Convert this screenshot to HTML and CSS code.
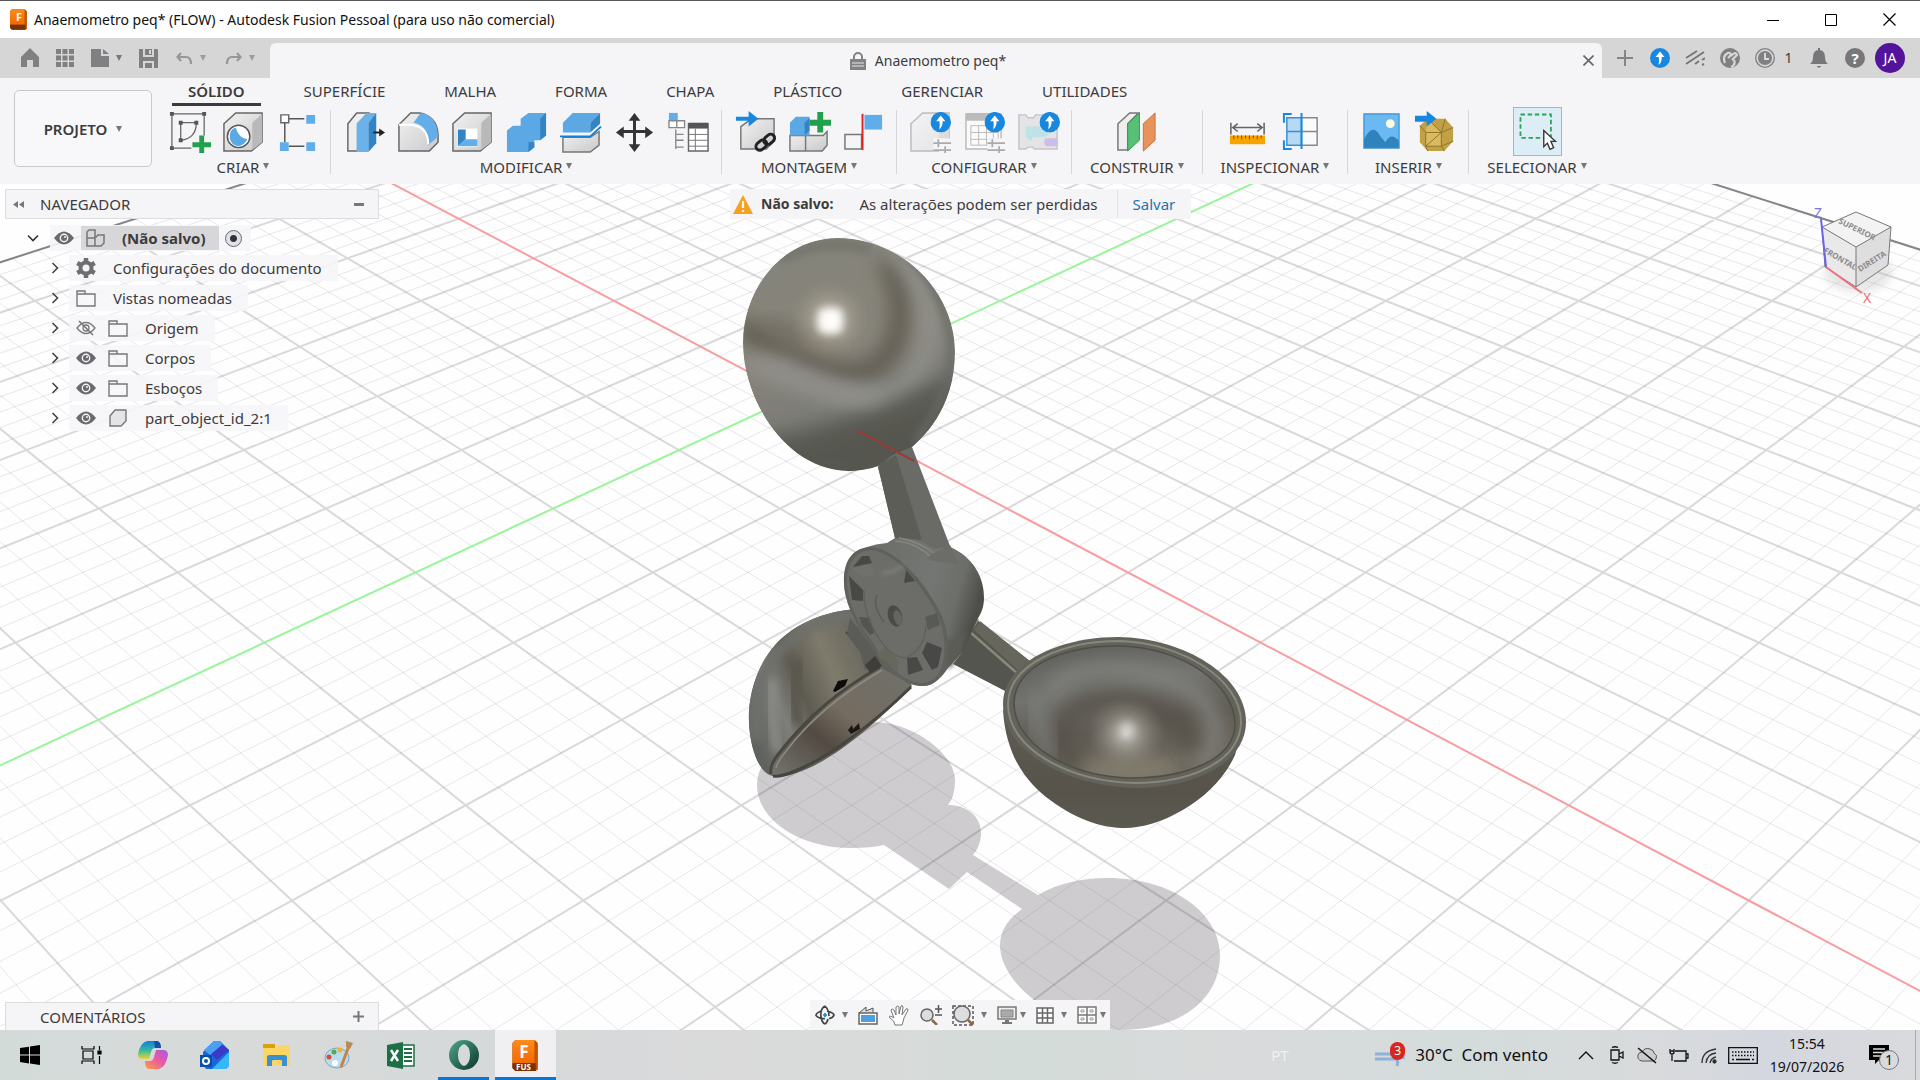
FILE: index.html
```html
<!DOCTYPE html>
<html lang="pt-BR">
<head>
<meta charset="utf-8">
<title>Anaemometro peq* (FLOW) - Autodesk Fusion Pessoal</title>
<meta name="viewport" content="width=device-width, initial-scale=1">
<link rel="stylesheet" href="styles.css">
</head>
<body>
<svg class="defs" width="0" height="0" aria-hidden="true">
  <defs>
    <linearGradient id="orange" x1="0" y1="0" x2="0" y2="1"><stop offset="0" stop-color="#ff8a1c"/><stop offset="1" stop-color="#f26a00"/></linearGradient>
    <linearGradient id="steel" x1="0" y1="0" x2="1" y2="1"><stop offset="0" stop-color="#f2f2f2"/><stop offset="1" stop-color="#c9c9c9"/></linearGradient>
    <symbol id="fusion" viewBox="0 0 28 32"><path d="M3 0h20l3 3v27l-2 2H3L0 29V3z" fill="#a33f00"/><path d="M3 0h20v24H0V3z" fill="url(#orange)"/><path d="M23 1l3 3v27l-3-1z" fill="#c65300"/><path d="M0 24h24v8H3L0 29z" fill="#7c2f00"/></symbol>
    <symbol id="eye" viewBox="0 0 20 14"><path d="M0 7Q10-6 20 7Q10 20 0 7z" fill="#6a6a6e"/><circle cx="10" cy="7" r="4.4" fill="#f5f4f7"/><circle cx="10" cy="7" r="3" fill="#6a6a6e"/><circle cx="11" cy="6" r="1" fill="#f5f4f7"/></symbol>
    <symbol id="folder" viewBox="0 0 20 17"><path d="M1 4V1h8v3M1 4h18v12H1z" fill="none" stroke="#77777b" stroke-width="1.4"/></symbol>
    <symbol id="chev" viewBox="0 0 8 12"><path d="M1.5 1l5 5-5 5" fill="none" stroke="#444" stroke-width="1.6"/></symbol>
    <symbol id="up" viewBox="0 0 20 20"><circle cx="10" cy="10" r="10" fill="#1787e0"/><path d="M10 3.5L14.500 9H11.800Q12 14 8.500 17Q9.500 13 8.700 9H5.500z" fill="#fff"/></symbol>
    <symbol id="box" viewBox="0 0 44 44"><path d="M2 14L14 3H41V33L30 42H2z" fill="url(#steel)" stroke="#666" stroke-width="1.500"/><path d="M31 13L41 4V33L31 41z" fill="#b9b9b9"/></symbol>
  </defs>
</svg>

<div class="app">
  <header class="titlebar">
    <span class="applogo"><svg width="18" height="21"><use href="#fusion"/></svg><b>F</b></span>
    <h1>Anaemometro peq* (FLOW) - Autodesk Fusion Pessoal (para uso não comercial)</h1>
    <div class="wincontrols">
      <button aria-label="Minimizar"><svg width="12" height="12"><path d="M0 6.500h12" stroke="#000"/></svg></button>
      <button aria-label="Maximizar"><svg width="12" height="12"><path d="M.5.5h11v11H.5z" fill="none" stroke="#000"/></svg></button>
      <button aria-label="Fechar"><svg width="13" height="13"><path d="M.5.5l12 12M12.500.5l-12 12" stroke="#000" stroke-width="1.200"/></svg></button>
    </div>
  </header>

  <div class="tabbar">
    <div class="quick">
      <button aria-label="Início"><svg width="20" height="20"><path d="M10 0L19 9V19H13V12H7V19H1V9z" fill="#808083"/></svg></button>
      <button aria-label="Painel de dados"><svg width="18" height="18" fill="#808083"><path d="M0 0h5v5H0zM6.500 0h5v5h-5zM13 0h5v5h-5zM0 6.500h5v5H0zM6.500 6.500h5v5h-5zM13 6.500h5v5h-5zM0 13h5v5H0zM6.500 13h5v5h-5zM13 13h5v5h-5z"/></svg></button>
      <button class="wide" aria-label="Arquivo"><svg width="18" height="18" fill="#808083"><path d="M0 0h10v7h8v11H0zM12 0l6 5h-6z"/></svg><i class="caret"></i></button>
      <button aria-label="Salvar"><svg width="19" height="19" fill="#808083"><path d="M0 0h4v8h11V0h3l1 1v18h-4v-7H4v7H0zM6 0h7v6H6zM6 14h7v5H6z"/><path d="M10 1h2v4h-2z" fill="#d6d6d6"/></svg></button>
      <button class="wide dim" aria-label="Desfazer"><svg width="17" height="13"><path d="M5 1L1.500 5L5 9M2 5h8q5 0 5 7" fill="none" stroke="#97979a" stroke-width="2.200"/></svg><i class="caret"></i></button>
      <button class="wide dim" aria-label="Refazer"><svg width="17" height="13"><path d="M12 1l3.500 4L12 9M15 5H7Q2 5 2 12" fill="none" stroke="#97979a" stroke-width="2.200"/></svg><i class="caret"></i></button>
    </div>
    <div class="doctab">
      <div class="docname"><svg width="16" height="18"><path d="M4 8V5a4 4 0 018 0v3" fill="none" stroke="#828285" stroke-width="2"/><path d="M0 7h16v11H0z" fill="#828285"/><path d="M2 11h12M2 14h12" stroke="#e6e6e8"/></svg><span>Anaemometro peq*</span></div>
      <button class="closetab" aria-label="Fechar guia"><svg width="11" height="11"><path d="M.5.5l10 10M10.500.5l-10 10" stroke="#666" stroke-width="1.600"/></svg></button>
    </div>
    <div class="status">
      <button aria-label="Nova guia"><svg width="16" height="16"><path d="M8 0v16M0 8h16" stroke="#858588" stroke-width="2"/></svg></button>
      <button aria-label="Atualização"><svg width="20" height="20"><use href="#up"/></svg></button>
      <button aria-label="Extensões"><svg width="20" height="16" stroke="#77777a" stroke-width="2" fill="none"><path d="M1 8L12 1M1 14L19 2M10 14l4-3M17 10l3-2M17 15l2-1"/></svg></button>
      <button aria-label="Estado"><svg width="20" height="20"><circle cx="10" cy="10" r="10" fill="#808083"/><path d="M5 15Q2 8 8 5Q10 4 11 7L8 10M11 8Q15 3 17 7L12 12M11 19Q16 17 14 12" stroke="#d6d6d6" stroke-width="2.200" fill="none"/></svg></button>
      <button class="jobs" aria-label="Tarefas"><svg width="20" height="20"><circle cx="10" cy="10" r="9.300" fill="none" stroke="#808083" stroke-width="1.300"/><circle cx="10" cy="10" r="7" fill="#808083"/><path d="M10 5v6h4" stroke="#ddd" stroke-width="1.800" fill="none"/></svg><span>1</span></button>
      <button aria-label="Notificações"><svg width="18" height="20" fill="#77777a"><path d="M8 0h2v2q5 1 5 7q0 5 3 7H0q3-2 3-7q0-6 5-7zM6.500 18h5l-2.500 2z"/></svg></button>
      <button class="help" aria-label="Ajuda">?</button>
      <button class="avatar" aria-label="Conta">JA</button>
    </div>
  </div>

  <div class="ribbon">
    <button class="workspace">PROJETO<i class="caret"></i></button>
    <div class="tools">
      <nav class="rtabs">
        <a href="#" class="on">SÓLIDO</a><a href="#">SUPERFÍCIE</a><a href="#">MALHA</a><a href="#">FORMA</a><a href="#">CHAPA</a><a href="#">PLÁSTICO</a><a href="#">GERENCIAR</a><a href="#">UTILIDADES</a>
      </nav>
      <div class="groups">
        <section class="group">
          <div class="icons">
            <button aria-label="Criar esboço"><svg viewBox="0 0 44 44"><path d="M4 4h33v22M4 4v35h20M13 13h16M13 13v18q16-2 16-18" fill="none" stroke="#666" stroke-width="1.300"/><g fill="#555"><path d="M2 2h4v4H2zM35 2h4v4h-4zM2 37h4v4H2zM11 11h4v4h-4zM27 11h4v4h-4zM11 29h4v4h-4z"/></g><path d="M32 26h5v7h7v5h-7v7h-5v-7h-7v-5h7z" fill="#22a04b"/></svg></button>
            <button aria-label="Furo"><svg viewBox="0 0 44 44"><use href="#box"/><circle cx="17" cy="27" r="11.500" fill="#fff" stroke="#555" stroke-width="1.500"/><path d="M8 29Q7 20 14 18Q17 29 26 30Q23 36 17 37Q9 36 8 29z" fill="#5aa9e6"/></svg></button>
            <button aria-label="Padrão"><svg viewBox="0 0 44 44"><path d="M13 9h16M13 37h16M9 13v20" stroke="#555" stroke-width="1.500"/><path d="M5 5h8v8H5z" fill="#fff" stroke="#666" stroke-width="1.500"/><path d="M31 5h9v9h-9zM4 33h9v9H4zM31 33h9v9h-9z" fill="#5fadea"/></svg></button>
          </div>
          <button class="glabel">CRIAR<i class="caret"></i></button>
        </section>
        <section class="group">
          <div class="icons">
            <button aria-label="Pressionar/puxar"><svg viewBox="0 0 44 44"><path d="M5 14L14 3h12L15 14v28H5z" fill="#eee" stroke="#666" stroke-width="1.500"/><path d="M14 14L24 3h10L26 13v30H14z" fill="#6bb2ea"/><path d="M26 13L34 3v31l-8 9z" fill="#3384c4"/><path d="M31 23h8" stroke="#222" stroke-width="2"/><path d="M37 19l6 4-6 4z" fill="#222"/></svg></button>
            <button aria-label="Arredondar"><svg viewBox="0 0 44 44"><path d="M2 15L14 3h10q17 4 18 22v8l-9 9H2z" fill="url(#steel)" stroke="#666" stroke-width="1.500"/><path d="M24 3q17 2 18 24l-10 9Q33 16 17 13z" fill="#63aee8"/><path d="M2 15h12q18 2 18 20" fill="none" stroke="#fff" stroke-width="2"/></svg></button>
            <button aria-label="Casca"><svg viewBox="0 0 44 44"><use href="#box"/><path d="M6 19h21v19H6z" fill="#fff"/><path d="M7 20h8v10l-8 7z" fill="#3384c4"/><path d="M15 30h12v7H7z" fill="#63aee8"/></svg></button>
            <button aria-label="Combinar"><svg viewBox="0 0 44 44"><path d="M2 21l6-5h8V9l8-6h18v23l-6 5h-6v7l-6 5H2z" fill="#5ba8e4"/><path d="M36 9l6-6v23l-6 5zM24 33h6v5l-6 5z" fill="#3384c4"/></svg></button>
            <button aria-label="Dividir corpo"><svg viewBox="0 0 44 44"><path d="M4 28h28l9-6v14l-9 7H4z" fill="url(#steel)" stroke="#777" stroke-width="1.500"/><path d="M4 13L14 3h28L32 13v10H4z" fill="#5ba8e4"/><path d="M32 13L42 3v11l-10 9z" fill="#3384c4"/><path d="M1 27h31l11-10" fill="none" stroke="#1680d0" stroke-width="2"/></svg></button>
            <button aria-label="Mover/copiar"><svg viewBox="0 0 44 44"><path d="M22 8v28M8 22h28" stroke="#333" stroke-width="3"/><path d="M22 3l6 8H16zM22 43l6-8H16zM3 23l8-6v12zM41 23l-8-6v12z" fill="#333"/></svg></button>
            <button aria-label="Parâmetros"><svg viewBox="0 0 44 44"><path d="M2 3h9v9H2z" fill="#5fadea"/><path d="M2 11h8v7H2zM10 11h8v7h-8zM9 20v20M9 25h8M9 31h8M9 38h8" fill="#fff" stroke="#888" stroke-width="1.400"/><path d="M22 14h20v28H22z" fill="#fff" stroke="#666" stroke-width="1.500"/><path d="M22 13h20v6H22z" fill="#555"/><path d="M22 25h20M22 31h20M22 37h20M29 19v23" stroke="#777"/></svg></button>
          </div>
          <button class="glabel">MODIFICAR<i class="caret"></i></button>
        </section>
        <section class="group">
          <div class="icons">
            <button aria-label="Inserir componente"><svg viewBox="0 0 44 44"><path d="M7 17L18 9h23v23l-8 8H7z" fill="url(#steel)" stroke="#777" stroke-width="1.500"/><path d="M2 7h13V1l10 8-10 8v-6H2z" fill="#1787e0"/><g fill="none" stroke="#222" stroke-width="3"><rect x="22" y="32" width="12" height="8" rx="4" transform="rotate(-40 28 36)"/><rect x="30" y="26" width="12" height="8" rx="4" transform="rotate(-40 36 30)"/></g></svg></button>
            <button aria-label="Novo componente"><svg viewBox="0 0 44 44"><path d="M2 26h34l4-4v14l-5 6H2zM18 26v16" fill="url(#steel)" stroke="#777" stroke-width="1.500"/><path d="M2 13l6-6h14v19H2z" fill="#5ba8e4"/><path d="M17 13l5-5v13l-5 5z" fill="#3384c4"/><path d="M30 2h6v8h8v6h-8v7h-6v-7h-8v-6h8z" fill="#22a04b"/></svg></button>
            <button aria-label="Junta"><svg viewBox="0 0 44 44"><path d="M3 25h17v15H3z" fill="none" stroke="#777" stroke-width="1.500"/><path d="M23 5h18v15H23z" fill="#5fadea"/><path d="M21 4v37" stroke="#d22" stroke-width="2"/></svg></button>
          </div>
          <button class="glabel">MONTAGEM<i class="caret"></i></button>
        </section>
        <section class="group">
          <div class="icons">
            <button aria-label="Configurar"><svg viewBox="0 0 44 44"><g opacity=".4"><use href="#box"/></g><path d="M25 29h19v13H25z" fill="#f5f4f7"/><path d="M25 34h18M25 41h18M30 30v8M37 37v7" stroke="#aaa" stroke-width="1.800"/><use href="#up" x="22" y="2" width="21" height="21"/></svg></button>
            <button aria-label="Tabela de configurações"><svg viewBox="0 0 44 44"><path d="M3 4h36v36H3z" fill="#fafafa" stroke="#bbb" stroke-width="1.500"/><path d="M3 3h36v8H3z" fill="#bbb"/><path d="M8 16h28v20H8zM8 23h28M8 30h28M16 16v20M24 16v20M31 16v20" fill="none" stroke="#bbb"/><path d="M25 29h19v13H25z" fill="#f5f4f7"/><path d="M25 34h18M25 41h18M30 30v8M37 37v7" stroke="#aaa" stroke-width="1.800"/><use href="#up" x="22" y="2" width="21" height="21"/></svg></button>
            <button aria-label="Regras"><svg viewBox="0 0 44 44"><path d="M2 5h7l2 3h6l2-3h22v35H18l-2-2h-5l-2 2H2z" fill="#e4e4e6" stroke="#c5c5c7" stroke-width="1.500"/><path d="M9 17h18q6 1 9 6l-8 5H16l-2 4-5-5z" fill="#bfe2e6"/><rect x="28" y="29" width="14" height="8" rx="3" fill="#cdbde8"/><use href="#up" x="23" y="2" width="21" height="21"/></svg></button>
          </div>
          <button class="glabel">CONFIGURAR<i class="caret"></i></button>
        </section>
        <section class="group">
          <div class="icons">
            <button aria-label="Plano de deslocamento"><svg viewBox="0 0 44 44"><path d="M3 14L15 3h9L13 14v27H3z" fill="#eee" stroke="#777" stroke-width="1.500"/><path d="M13 14L25 3v28L13 42z" fill="#57c074" stroke="#3b9655"/><path d="M29 14L41 3v28L29 42z" fill="#e8935c" stroke="#c27441"/></svg></button>
          </div>
          <button class="glabel">CONSTRUIR<i class="caret"></i></button>
        </section>
        <section class="group">
          <div class="icons">
            <button aria-label="Medir"><svg viewBox="0 0 44 44"><path d="M5 13v12M39 13v12M8 18h28M12 14l-5 4 5 4M32 14l5 4-5 4" fill="none" stroke="#666" stroke-width="1.600"/><path d="M4 26h36v9H4z" fill="#f6a400"/><path d="M8 26v4M12 26v3M16 26v4M20 26v3M24 26v4M28 26v3M32 26v4M36 26v3" stroke="#7a5200"/></svg></button>
            <button aria-label="Análise de seção"><svg viewBox="0 0 44 44"><path d="M22 8h16v28H22M22 22h16" fill="#fafafa" stroke="#888" stroke-width="1.500"/><path d="M7 8h15v28H7zM7 22h15" fill="#b6daf4" stroke="#3b8fd0" stroke-width="1.500"/><path d="M22 3v37M12 4H4v9M12 40H4v-9" fill="none" stroke="#1787e0" stroke-width="2"/></svg></button>
          </div>
          <button class="glabel">INSPECIONAR<i class="caret"></i></button>
        </section>
        <section class="group">
          <div class="icons">
            <button aria-label="Inserir imagem"><svg viewBox="0 0 44 44"><path d="M4 4h36v35H4z" fill="#6ab9f2"/><circle cx="31" cy="14" r="4.500" fill="#fdfbe0"/><path d="M4 30q9-18 17-3l5 6q6-11 14-1v7H4z" fill="#2f83bd"/><path d="M4 4h36v35H4z" fill="none" stroke="#3b8fd0" stroke-width="1.200"/></svg></button>
            <button aria-label="Inserir malha"><svg viewBox="0 0 44 44"><path d="M14 9h18l8 9v14l-9 10H14L6 33V16z" fill="#c2a045"/><path d="M12 23h16v14H12zM14 9l14 14H12z" fill="#d9bb60"/><path d="M14 9l14 14M32 9l-4 14H12L6 16M28 23l12-5M28 23v14l12-5M12 23v14h16l3 5M12 37L28 23M12 37l2 5" fill="none" stroke="#8f742b"/><path d="M1 6h12V1l10 8-10 8v-5H1z" fill="#1787e0"/></svg></button>
          </div>
          <button class="glabel">INSERIR<i class="caret"></i></button>
        </section>
        <section class="group last">
          <div class="icons">
            <button class="picked" aria-label="Selecionar"><svg viewBox="0 0 48 48"><path d="M5 5h34v26H5z" fill="none" stroke="#2ca35a" stroke-width="2" stroke-dasharray="5 3"/><path d="M31 23v18l4-4 3 7 4-2-3-7h5z" fill="#fff" stroke="#333" stroke-width="1.500"/></svg></button>
          </div>
          <button class="glabel">SELECIONAR<i class="caret"></i></button>
        </section>
      </div>
    </div>
  </div>

  <main class="stage">
    <svg class="scene" viewBox="0 184 1920 846" preserveAspectRatio="xMidYMid slice" role="img" aria-label="Modelo do anemômetro">
      <defs>
        <linearGradient id="ball" x1=".35" y1="0" x2=".6" y2="1"><stop offset="0" stop-color="#85847a"/><stop offset=".45" stop-color="#88847a"/><stop offset=".7" stop-color="#7c7c77"/><stop offset=".85" stop-color="#5c5c57"/><stop offset="1" stop-color="#55554f"/></linearGradient>
        <radialGradient id="glow"><stop offset="0" stop-color="#fff"/><stop offset=".2" stop-color="#e8e5df"/><stop offset=".5" stop-color="#b0a99b" stop-opacity=".7"/><stop offset="1" stop-color="#968e80" stop-opacity="0"/></radialGradient>
        <radialGradient id="soft"><stop offset="0" stop-color="#c8c6c1"/><stop offset=".3" stop-color="#a3a098" stop-opacity=".9"/><stop offset="1" stop-color="#7c766b" stop-opacity="0"/></radialGradient>
        <linearGradient id="cupout" x1="0" y1="0" x2="0" y2="1"><stop offset="0" stop-color="#5d5c54"/><stop offset=".7" stop-color="#57534b"/><stop offset="1" stop-color="#5a5a50"/></linearGradient>
        <linearGradient id="cupin" x1="0" y1="0" x2=".3" y2="1"><stop offset="0" stop-color="#5b5c57"/><stop offset=".4" stop-color="#72726e"/><stop offset=".7" stop-color="#5f5a54"/><stop offset="1" stop-color="#6c675c"/></linearGradient>
        <linearGradient id="lcup" x1="0" y1=".7" x2="1" y2=".2"><stop offset="0" stop-color="#60625d"/><stop offset=".22" stop-color="#7e7f7b"/><stop offset=".38" stop-color="#5e5b52"/><stop offset=".6" stop-color="#7f7b6c"/><stop offset="1" stop-color="#5b5a53"/></linearGradient>
        <linearGradient id="lin" x1="0" y1="1" x2="1" y2="0"><stop offset="0" stop-color="#74766f"/><stop offset=".35" stop-color="#524a43"/><stop offset=".55" stop-color="#756c60"/><stop offset="1" stop-color="#6f706b"/></linearGradient>
        <linearGradient id="hub" x1="0" y1="0" x2="1" y2=".3"><stop offset="0" stop-color="#696a66"/><stop offset=".65" stop-color="#737672"/><stop offset=".85" stop-color="#6c6e6a"/><stop offset="1" stop-color="#4d4d49"/></linearGradient>
        <filter id="b2" x="-50%" y="-50%" width="200%" height="200%"><feGaussianBlur stdDeviation="2"/></filter>
        <filter id="b4" x="-50%" y="-50%" width="200%" height="200%"><feGaussianBlur stdDeviation="4"/></filter>
        <filter id="b9" x="-50%" y="-50%" width="200%" height="200%"><feGaussianBlur stdDeviation="9"/></filter>
        <path id="ballshape" d="M743 343C743 285 785 238 838 238C900 238 955 290 955 352C955 410 920 440 912 447C890 465 868 471 848 471C785 469 743 400 743 343z"/>
        <clipPath id="ballclip"><use href="#ballshape"/></clipPath>
        <path id="inner" d="M1014 703C1015 665 1065 645 1122 646C1182 648 1235 684 1235 724C1235 760 1185 778 1130 778C1066 776 1014 743 1014 703z"/>
        <clipPath id="innerclip"><use href="#inner"/></clipPath>
        <path id="cupshape" d="M860 609C825 610 790 625 771 650C752 675 748 705 749 722C750 748 758 768 768 774Q772 755 811 720C835 698 855 680 880 667L890 640z"/>
        <clipPath id="cupclip"><use href="#cupshape"/></clipPath>
        <path id="hubshape" d="M844 583C844 558 856 546 887 543L895 538Q915 536 934 549L950 547C972 556 985 577 984 600C983 612 979 616 977 620L967 643C962 655 953 662 948 668C940 680 932 686 923 686C900 686 880 662 870 643Q845 610 844 583z"/>
      </defs>
      <rect y="184" width="1920" height="846" fill="#fefefe"/>
      <g class="shadow">
        <path d="M757 785C757 750 805 722 872 722C915 722 955 755 955 780Q955 797 948 805C965 805 982 815 981 835Q980 847 973 855L1038 895C1060 882 1085 878 1108 878C1175 878 1220 915 1220 955C1220 1000 1180 1030 1120 1030C1060 1030 1000 985 1000 945Q1000 925 1022 909L967 872L949 889L884 845Q872 848 850 848C800 848 757 820 757 785z"/>
      </g>
      <path id="minor" class="minor"/>
      <path id="major" class="major"/>
      <path id="edge" class="edge"/>
      <path id="axisg" class="axisg"/>
      <path id="axisr" class="axisr"/>

      <!-- far cup, seen from the side -->
      <path d="M860 609C825 610 790 625 771 650C752 675 748 705 749 722C750 748 758 768 768 774Q775 779 790 775C830 765 880 720 912 686L890 640z" fill="#5f605a"/>
      <g clip-path="url(#cupclip)">
        <use href="#cupshape" fill="url(#lcup)"/>
        <path d="M865 616C820 612 785 640 770 662C758 685 754 710 756 740" fill="none" stroke="#6e706c" stroke-width="12" filter="url(#b4)"/>
        <path d="M772 680Q770 720 778 752" fill="none" stroke="#8b8c88" stroke-width="9" filter="url(#b4)"/>
        <path d="M800 660Q788 700 800 725" fill="none" stroke="#5a564d" stroke-width="12" filter="url(#b4)"/>
      </g>
      <path d="M770 774Q770 764 781 752C800 726 830 695 880 667L911 685C880 720 835 760 795 770Q780 777 772 775z" fill="url(#lin)"/>
      <path d="M771 774Q769 765 780 752C800 726 830 695 880 667" fill="none" stroke="#484741" stroke-width="3"/>
      <path d="M773 776Q781 777 795 771C830 757 875 722 911 687" fill="none" stroke="#45443f" stroke-width="3"/>
      <path d="M776 768Q777 762 787 750C805 726 836 697 882 670" fill="none" stroke="#8c8c84" stroke-width="1.500"/>
      <path d="M833 691L838 681L848 679L845 686L835 692z" fill="#0d0c0a"/>
      <path d="M848 730l4-5 1 4 6-6 1 6-9 5z" fill="#1b1813"/>
      <path d="M846 632Q860 645 867 664" fill="none" stroke="#45433c" stroke-width="2"/>
      <path d="M850 618L882 660L865 670L860 652L847 635z" fill="#5b5c57"/>
      <path d="M865 665l10-9 7 10-12 7z" fill="#3f3e39"/>

      <!-- upper ball -->
      <g clip-path="url(#ballclip)">
        <use href="#ballshape" fill="url(#ball)"/>
        <path d="M752 320Q745 335 757 338C790 355 835 385 870 370C910 350 905 285 885 260" fill="none" stroke="#645e54" stroke-width="22" filter="url(#b9)"/>
        <path d="M765 362C800 372 825 392 868 398C895 398 925 380 930 330C930 290 910 265 890 250" fill="none" stroke="#92938f" stroke-width="14" filter="url(#b9)"/>
        <path d="M745 358C790 385 850 398 885 400" fill="none" stroke="#92918c" stroke-width="14" filter="url(#b9)"/>
        <path d="M780 260Q820 235 870 250" fill="none" stroke="#74746d" stroke-width="10" filter="url(#b4)"/>
        <path d="M760 440C830 440 880 405 960 370V480H760z" fill="#56564f" opacity=".75" filter="url(#b9)"/>
        <path d="M910 255Q950 300 952 350Q950 400 915 443" fill="none" stroke="#676965" stroke-width="7" filter="url(#b4)"/>
        <path d="M765 322Q800 338 835 345" fill="none" stroke="#6a6358" stroke-width="10" filter="url(#b9)"/>
        <circle cx="830" cy="320" r="40" fill="url(#glow)" opacity=".8"/>
        <rect x="820" y="310" width="21" height="22" fill="#fffefb" filter="url(#b4)"/>
      </g>
      <!-- arm down to the hub -->
      <path d="M878 467Q885 458 896 453L912 447L950 546L962 566L920 560L895 538L881 479z" fill="#6a6b66"/>
      <path d="M896 455L922 540L895 538L881 479L878 467z" fill="#5c5d57"/>
      <path d="M878 468Q890 452 912 446L896 451z" fill="#4c4c46"/>

      <!-- right arm -->
      <path d="M960 655L976 620L980 622L1031 662L1007 692L953 664z" fill="#54554f"/>
      <path d="M974 630L980 621L1031 662L1020 672z" fill="#66665d"/>
      <path d="M978 619L970 632L1018 674" fill="none" stroke="#8a8979" stroke-width="2.500"/>

      <!-- hub -->
      <use href="#hubshape" fill="url(#hub)"/>
      <path d="M895 541Q915 542 931 557M899 538Q920 542 934 553" fill="none" stroke="#858680" stroke-width="1.500"/>
      <path d="M930 555L950 545L959 564L928 560z" fill="#6c6d68"/>
      <path d="M960 655Q953 664 948 670L946 640Q955 640 966 632z" fill="#5b5c57" filter="url(#b2)"/>
      <path d="M844 583C843 558 855 547 872 547C900 550 930 590 942 616C955 650 946 686 923 686C900 686 880 662 870 643Q845 610 844 583z" fill="#5f615d"/>
      <path d="M847 583C847 561 857 550 872 550C898 553 927 592 939 618C951 650 943 683 923 683C902 683 882 660 872 641Q848 610 847 583z" fill="#6c6d69"/>
      <g fill="#484946">
        <path d="M853 567L862 556L869 556L872 563z"/><path d="M849 576L863 590L863 601L852 600z"/>
        <path d="M859 617L870 618L874 633L870 635L862 625z" fill="#545551"/><path d="M906 570L915 581L904 583z"/>
        <path d="M925 617L937 613L940 625L928 630z" fill="#585a56"/><path d="M927 642L942 648L938 667L932 670L922 653z"/>
        <path d="M907 658L917 657L923 670L908 675z"/><path d="M877 655L885 647L898 660L898 672z" fill="#67675d"/>
      </g>
      <path d="M853 568L872 564L874 575L864 577L853 570z" fill="#6f716d"/>
      <path d="M882 574l12-3 10-6" fill="none" stroke="#8a8b87" stroke-width="2" filter="url(#b2)"/>
      <path d="M877 595Q872 606 884 622" fill="none" stroke="#5a5c58" stroke-width="1.500"/>
      <path d="M864 590Q863 615 880 640Q892 657 905 658Q925 650 926 625" fill="none" stroke="#5d5f5a" stroke-width="1.200"/>
      <ellipse cx="895" cy="616" rx="7" ry="11" transform="rotate(-18 895 616)" fill="#4a4b48"/>
      <ellipse cx="898" cy="618" rx="4" ry="8" transform="rotate(-18 898 618)" fill="#646561"/>

      <!-- right cup -->
      <path d="M1003 710C1006 760 1030 785 1050 800C1080 822 1105 828 1125 828C1160 828 1215 800 1235 755L1245 720z" fill="url(#cupout)"/>
      <path d="M1003 704C1003 662 1060 637 1118 637C1185 638 1246 676 1246 722C1246 765 1190 788 1136 788C1066 786 1003 752 1003 704z" fill="#63635b"/>
      <path d="M1008 704C1009 664 1062 641 1120 641C1183 643 1241 680 1241 722C1240 763 1188 783 1134 783C1068 781 1008 749 1008 704z" fill="none" stroke="#87877c" stroke-width="2"/>
      <g clip-path="url(#innerclip)">
        <use href="#inner" fill="url(#cupin)"/>
        <path d="M1050 695C1060 665 1130 663 1170 680C1215 695 1230 740 1195 765" fill="none" stroke="#82837f" stroke-width="15" filter="url(#b9)"/>
        <path d="M1078 770C1045 730 1070 700 1110 700C1150 700 1185 720 1195 750" fill="none" stroke="#57514a" stroke-width="16" filter="url(#b9)"/>
        <path d="M1036 695Q1035 725 1050 755" fill="none" stroke="#7c807c" stroke-width="13" filter="url(#b9)"/>
        <ellipse cx="1130" cy="770" rx="50" ry="16" fill="#8a8475" opacity=".7" filter="url(#b9)"/>
        <ellipse cx="1126" cy="734" rx="40" ry="38" fill="url(#soft)"/>
        <circle cx="1127" cy="729" r="7" fill="#f3f2ef" opacity=".5" filter="url(#b4)"/>
      </g>
      <use href="#inner" fill="none" stroke="#4f4f49" stroke-width="1.500"/>
      <path class="axisr thru" d="M858 431L914 461"/>

      <!-- view cube -->
      <g class="cube">
        <ellipse cx="1858" cy="272" rx="34" ry="20" fill="#bbb" opacity=".35" filter="url(#b4)"/>
        <path d="M1856 212L1891 227L1856 247L1822 227z" fill="#f3f3f3"/>
        <path d="M1822 227L1856 247V287L1825 267z" fill="#e9e9ea"/>
        <path d="M1891 227L1856 247V287L1888 265z" fill="#dededf"/>
        <path d="M1856 212L1891 227L1888 265L1856 287L1825 267L1822 227zM1822 227L1856 247L1891 227M1856 247V287" fill="none" stroke="#77777a"/>
        <path d="M1821 219L1826 267" stroke="#6b62f0" stroke-width="2"/><path d="M1826 267L1862 293" stroke="#f0707a" stroke-width="2"/>
        <text x="1814" y="218" fill="#7b73f2" font-size="14">Z</text><text x="1863" y="303" fill="#f56b6b" font-size="14">X</text>
        <g fill="#8a8a8d" font-size="8" font-weight="bold"><text x="1838" y="223" transform="rotate(26 1838 223)">SUPERIOR</text><text x="1823" y="252" transform="rotate(30 1823 252)">FRONTAL</text><text x="1860" y="272" transform="rotate(-32 1860 272)">DIREITA</text></g>
      </g>
    </svg>

    <aside class="browser">
      <header class="panelhead"><button aria-label="Recolher"><svg width="11" height="7"><path d="M5 0v7L0 3.500zM11 0v7L6 3.500z" fill="#77777a"/></svg></button><h2>NAVEGADOR</h2><button aria-label="Minimizar painel"><svg width="10" height="3"><path d="M0 0h10v3H0z" fill="#77777a"/></svg></button></header>
      <ul class="tree">
        <li class="root"><svg class="chev" width="12" height="8"><path d="M1 1.500l5 5 5-5" fill="none" stroke="#333" stroke-width="1.600"/></svg><div class="node"><svg width="20" height="14"><use href="#eye"/></svg><span class="sel"><svg width="20" height="18"><path d="M1 9V3l2-2h6v8M1 9h8v8H1zM9 9l3-3h6v8l-3 3H9" fill="none" stroke="#77777a" stroke-width="1.500"/></svg><b>(Não salvo)</b></span><input type="radio" checked aria-label="Ativar componente"></div></li>
        <li><svg class="chev" width="8" height="12"><use href="#chev"/></svg><div class="node"><svg width="20" height="20"><circle cx="10" cy="10" r="7.500" fill="#6f6f72"/><path d="M10 0v20M1.300 5l17.400 10M1.300 15L18.700 5" stroke="#6f6f72" stroke-width="4.500"/><circle cx="10" cy="10" r="3.500" fill="#f5f4f7"/></svg><span>Configurações do documento</span></div></li>
        <li><svg class="chev" width="8" height="12"><use href="#chev"/></svg><div class="node"><svg width="20" height="17"><use href="#folder"/></svg><span>Vistas nomeadas</span></div></li>
        <li><svg class="chev" width="8" height="12"><use href="#chev"/></svg><div class="node"><svg width="20" height="16"><path d="M1 8Q10-3 19 8Q10 19 1 8z" fill="none" stroke="#77777a" stroke-width="1.300"/><circle cx="10" cy="8" r="3" fill="none" stroke="#77777a" stroke-width="1.300"/><path d="M3 1l14 14" stroke="#77777a" stroke-width="1.600"/></svg><svg width="20" height="17"><use href="#folder"/></svg><span>Origem</span></div></li>
        <li><svg class="chev" width="8" height="12"><use href="#chev"/></svg><div class="node"><svg width="20" height="14"><use href="#eye"/></svg><svg width="20" height="17"><use href="#folder"/></svg><span>Corpos</span></div></li>
        <li><svg class="chev" width="8" height="12"><use href="#chev"/></svg><div class="node"><svg width="20" height="14"><use href="#eye"/></svg><svg width="20" height="17"><use href="#folder"/></svg><span>Esboços</span></div></li>
        <li><svg class="chev" width="8" height="12"><use href="#chev"/></svg><div class="node"><svg width="20" height="14"><use href="#eye"/></svg><svg width="20" height="18"><path d="M2 7l5-6h11v11l-5 5H2z" fill="#e4e4e6" stroke="#77777a" stroke-width="1.400"/></svg><span>part_object_id_2:1</span></div></li>
      </ul>
    </aside>

    <div class="notice">
      <svg width="20" height="19"><path d="M10 0l10 19H0z" fill="#f7a01f"/><path d="M10 6v7M10 15v2" stroke="#fff" stroke-width="2.200"/></svg>
      <b>Não salvo:</b><span>As alterações podem ser perdidas</span><a href="#">Salvar</a>
    </div>

    <div class="panelhead comments"><h2>COMENTÁRIOS</h2><button aria-label="Expandir comentários"><svg width="11" height="11"><path d="M5.500 0v11M0 5.500h11" stroke="#77777a" stroke-width="2"/></svg></button></div>

    <div class="navbar">
      <button class="far" aria-label="Órbita"><svg width="20" height="20" fill="none" stroke="#444" stroke-width="1.700"><path d="M10 1Q5 4 6 12Q7 18 10 19M10 1Q14 5 14 11M13 14Q12 18 10 19M6 6Q1 8 1 10.500Q4 14 10 13.500M12 6Q19 8 19 10Q18 13 14 13.500"/><path d="M8 10h4M10 8v4" stroke="#1787e0"/></svg><i class="caret"></i></button>
      <button aria-label="Olhar para"><svg width="20" height="19"><path d="M1 7L8 1v4l7-3v5" fill="#ddd" stroke="#555"/><path d="M1 7h18v11H1z" fill="#fff" stroke="#666" stroke-width="1.500"/><path d="M3 9h14v7H3z" fill="#4f9fdd"/></svg></button>
      <button aria-label="Pan"><svg width="22" height="21"><path d="M7 20Q7 16 1 12q1-2 5 1L3 5q1-2 3 0l2 5V2q2-2 3 0v7l2-8q2-1 2 1l-1 8 4-6q2-1 2 1l-4 8q-1 4-2 7z" fill="#fff" stroke="#777"/></svg></button>
      <button aria-label="Zoom"><svg width="22" height="20"><circle cx="7" cy="10" r="6" fill="#ddd" stroke="#666" stroke-width="1.500"/><path d="M12 15l5 5" stroke="#8a6a3c" stroke-width="2.500"/><path d="M15 4h7M18.500 0v8M15 10h7" stroke="#555" stroke-width="1.500"/></svg></button>
      <button class="far" aria-label="Ajustar"><svg width="22" height="21"><path d="M1 1h20v19H1z" fill="none" stroke="#555" stroke-width="1.500" stroke-dasharray="3 2"/><circle cx="10" cy="9" r="8" fill="#ddd" stroke="#666" stroke-width="1.500"/><path d="M16 15l5 5" stroke="#8a6a3c" stroke-width="2.500"/></svg><i class="caret"></i></button>
      <button aria-label="Exibição"><svg width="20" height="18"><path d="M1 1h18v12H1z" fill="#eee" stroke="#777" stroke-width="1.500"/><path d="M4 4h12v7H4z" fill="#aaa" stroke="#888"/><path d="M8 14h4v2h3v2H5v-2h3z" fill="#777"/></svg><i class="caret"></i></button>
      <button class="far" aria-label="Grade"><svg width="18" height="17"><path d="M1 1h16v15H1zM1 6h16M1 11h16M6.500 1v15M11.500 1v15" fill="#fff" stroke="#666" stroke-width="1.500"/></svg><i class="caret"></i></button>
      <button aria-label="Vistas"><svg width="20" height="18"><path d="M1 1h18v16H1zM10 1v16M1 9h18" fill="#fff" stroke="#777" stroke-width="1.500"/><path d="M4 4h3v2H4zM13 4h3v2h-3zM4 12h3v2H4zM13 12h3v2h-3z" fill="none" stroke="#999"/></svg><i class="caret"></i></button>
    </div>
  </main>

  <footer class="taskbar">
    <div class="apps">
      <button aria-label="Iniciar"><svg width="20" height="20"><path d="M0 3l9-1.300V9.500H0zM10 1.500L20 0v9.500H10zM0 10.500h9v8L0 17zM10 10.500h10V20l-10-1.500z"/></svg></button>
      <button aria-label="Visão de tarefas"><svg width="21" height="20" fill="none" stroke="#000" stroke-width="1.200"><path d="M1 1v3h12V1M1 19v-3h12v3M2 6h10v8H2zM18.500 1v4M18.500 11v8"/><path d="M17 6h3v3h-3z" fill="#000"/></svg></button>
      <button aria-label="Copilot"><svg width="30" height="28"><defs><linearGradient id="c1" x1="0" y1="0" x2="0" y2="1"><stop offset="0" stop-color="#1b7be0"/><stop offset=".5" stop-color="#2fb8a0"/><stop offset="1" stop-color="#e8d43a"/></linearGradient><linearGradient id="c2" x1="1" y1="0" x2="0" y2="1"><stop offset="0" stop-color="#a558e8"/><stop offset=".5" stop-color="#ef5aa0"/><stop offset="1" stop-color="#f9a13c"/></linearGradient></defs><path d="M9 0h10q4 1 4 7h-6q-3 0-4 4l-2 7H4q-4 0-4-5Q2 2 9 0z" fill="url(#c1)"/><path d="M16 0h3q4 1 4 7h-6z" fill="#1550a8"/><path d="M21 28H11q-4-1-4-8h5q3 0 4-4l2-7h7q5 0 5 5Q28 26 21 28z" fill="url(#c2)"/></svg></button>
      <button aria-label="Outlook"><svg width="30" height="28"><path d="M3 11L14 0h6l9 9v16l-3 3H6l-3-4z" fill="#1b66d9"/><path d="M8 10L19 2l10 7-12 10z" fill="#3b39c8"/><path d="M4 9L14 0h6l3 3L10 14z" fill="#4aa0f5"/><path d="M12 28L29 11v14l-3 3z" fill="#35b8f5"/><path d="M0 14h12v12H0z" fill="#0a4fa8"/><circle cx="6" cy="20" r="3" fill="none" stroke="#fff" stroke-width="2"/></svg></button>
      <button aria-label="Explorador de arquivos"><svg width="28" height="24"><path d="M0 1h12v6H0z" fill="#d9a20b"/><path d="M0 5h12l3-3h12v21H0z" fill="#fcd665"/><path d="M4 23V14q0-2 3-2h14q3 0 3 2v9h-5v-5q0-1-2-1h-6q-2 0-2 1v5z" fill="#3a8fd0"/></svg></button>
      <button aria-label="Paint"><svg width="30" height="28"><ellipse cx="13" cy="17" rx="12" ry="10" fill="#b9dcef" stroke="#7ba7c4"/><circle cx="5" cy="16" r="2.500" fill="#d84a3a"/><circle cx="10" cy="11" r="2.500" fill="#58a94a"/><circle cx="16" cy="9" r="2.500" fill="#efb530"/><circle cx="11" cy="22" r="3" fill="#fff"/><path d="M26 2l-9 24" stroke="#c98145" stroke-width="3"/><path d="M22 0l7 2-3 6-4-2z" fill="#b58b5a"/></svg></button>
      <button aria-label="Excel"><svg width="28" height="27"><path d="M14 3h13v21H14z" fill="#fff" stroke="#1d7044" stroke-width="1.500"/><path d="M17 7h8M17 11h8M17 15h8M17 19h8" stroke="#1d7044" stroke-width="2"/><path d="M0 3l16-3v27L0 24z" fill="#1d7044"/><path d="M4 8l7 11M11 8L4 19" stroke="#fff" stroke-width="2.500"/></svg></button>
      <button class="open" aria-label="Opera"><svg width="30" height="30"><defs><linearGradient id="op" x1="0" y1="0" x2="1" y2="1"><stop offset="0" stop-color="#4fa88d"/><stop offset="1" stop-color="#0d332b"/></linearGradient></defs><path fill-rule="evenodd" d="M15 0a15 15 0 010 30a15 15 0 010-30zM15 4q-6 2-6 11t6 11q6-2 6-11T15 4z" fill="url(#op)"/></svg></button>
      <button class="open active" aria-label="Fusion"><span class="tasklogo"><svg width="28" height="31"><use href="#fusion"/></svg><b>F</b><small>FUS</small></span></button>
    </div>
    <span class="lang">PT</span>
    <div class="tray">
      <button class="weather"><span class="wind"><svg width="30" height="26"><path d="M0 12h24q5 0 4 5M0 17h20q4 1 2 7" fill="none" stroke="#8fb0d8" stroke-width="3"/></svg><em>3</em></span><span>30°C&nbsp; Com vento</span></button>
      <button aria-label="Ícones ocultos"><svg width="16" height="10"><path d="M1 9l7-7 7 7" fill="none" stroke="#111" stroke-width="1.400"/></svg></button>
      <button aria-label="Câmera"><svg width="16" height="18" fill="none" stroke="#111" stroke-width="1.300"><path d="M2 4h8v10H2zM10 8l4-2v6l-4-2M3 1.500q3-1.500 6 0M3 16.500q3 1.500 6 0"/></svg></button>
      <button aria-label="OneDrive"><svg width="21" height="17"><path d="M5 14q-5-1-4-6q1-3 4-3q3-5 8-3q4 1 4 4q4 2 2 6q-1 2-4 2z" fill="#ccc" stroke="#555"/><path d="M1 1l18 15" stroke="#111" stroke-width="1.600"/></svg></button>
      <button aria-label="Bateria"><svg width="20" height="14" fill="none" stroke="#111" stroke-width="1.300"><path d="M6 3h11v10H5M17 6h2v4h-2M3 7v6M1 1v3q0 2 2 2t2-2V1M1 3h4"/></svg></button>
      <button aria-label="Wi-Fi"><svg width="17" height="17" fill="none" stroke="#333" stroke-width="1.300"><path d="M1 16Q1 4 15 2M5 16Q6 7 15 6M9 16Q10 11 15 10"/><circle cx="13.500" cy="14.500" r="1.500" fill="#111"/></svg></button>
      <button class="kb" aria-label="Teclado"><svg width="30" height="17"><path d="M.7.7h28.600v15.600H.7z" fill="none" stroke="#111" stroke-width="1.300"/><path d="M4 5h22M4 8.500h22" stroke="#111" stroke-width="1.500" stroke-dasharray="1.500 1.500"/><path d="M4 12.500h2M8 12.500h14M24 12.500h2" stroke="#111" stroke-width="1.300"/></svg></button>
      <button class="clock"><time>15:54</time><time>19/07/2026</time></button>
      <button class="notes" aria-label="Notificações"><svg width="20" height="20"><path d="M0 0h20v15H10l-4 4v-4H0z"/><path d="M4 4h12M4 7.500h12M4 11h8" stroke="#ddd" stroke-width="1.300"/></svg><em>1</em></button>
    </div>
  </footer>
</div>
<script src="grid.js"></script>
</body>
</html>
```

FILE: styles.css
```css
* { box-sizing: border-box; }
body { margin: 0; font: 15px/20px "Noto Sans", sans-serif; color: #3c3c3c; }
button { border: 0; padding: 0; background: none; font: inherit; color: inherit; display: flex; align-items: center; justify-content: center; flex: none; }
svg { display: block; flex: none; }
a { color: inherit; text-decoration: none; }
h1, h2 { margin: 0; font: inherit; font-weight: normal; }
.defs { position: absolute; }
.app { display: flex; flex-direction: column; min-height: 100vh; overflow: hidden; }
.caret { flex: none; border: 3px solid transparent; border-top: 6px solid #77777a; border-bottom: 0; }

.titlebar { display: flex; align-items: center; height: 38px; background: #fff; border-top: 1px solid #55555a; padding-left: 10px; gap: 6px; color: #111; }
.titlebar h1 { flex: 1; font-size: 14px; white-space: nowrap; }
.applogo, .tasklogo { display: grid; justify-items: center; }
.applogo > *, .tasklogo > * { grid-area: 1 / 1; }
.applogo b { color: #fff; font-size: 11px; line-height: 15px; }
.wincontrols { display: flex; margin-right: 2px; }
.wincontrols button { width: 58px; height: 36px; }

.tabbar { display: flex; height: 40px; background: #d6d6d6; }
.quick { display: flex; align-items: center; width: 270px; padding-left: 12px; }
.quick button { width: 35px; height: 36px; gap: 7px; }
.quick .wide { width: 49px; }
.quick .dim .caret { opacity: .6; }
.doctab { flex: 1; display: flex; align-items: center; margin-top: 5px; padding: 0 8px; border-radius: 6px 6px 0 0; background: #f5f4f7; }
.docname { flex: 1; display: flex; justify-content: center; align-items: center; gap: 9px; padding-right: 4px; font-size: 14px; }
.closetab { width: 12px; height: 24px; }
.status { display: flex; align-items: center; width: 318px; padding-left: 5px; }
.status button { width: 35px; height: 35px; }
.status .jobs { width: 54px; gap: 9px; font-size: 14px; }
.status .help { width: 20px; height: 20px; margin: 0 10px 0 9px; border-radius: 50%; background: #77777a; color: #fff; font-weight: bold; }
.status .avatar { width: 30px; height: 30px; border-radius: 50%; background: #53139a; color: #fff; font-size: 14px; }

.ribbon { display: flex; gap: 4px; min-height: 106px; padding-left: 14px; background: #f5f4f7; }
.workspace { width: 138px; height: 77px; margin-top: 12px; gap: 9px; border: 1px solid #c9c9cc; border-radius: 5px; background: #f8f7f9; font-weight: 600; }
.tools { flex: 1; min-width: 0; }
.rtabs { display: flex; gap: 27px; padding-left: 16px; height: 28px; }
.rtabs a { padding: 3px 16px 2px; height: 28px; border-bottom: 3px solid transparent; }
.rtabs .on { font-weight: 600; border-color: #3c3c3c; }
.groups { display: flex; }
.group { display: flex; flex-direction: column; align-items: center; padding: 0 6px; border-right: 1px solid #d6d6d9; margin-top: 4px; height: 64px; }
.group.last { border: 0; }
.icons { display: flex; height: 42px; align-items: center; flex: none; }
.icons button { width: 54px; height: 44px; }
.icons svg { width: 43px; height: 43px; }
.icons .picked { width: 49px; height: 49px; background: #dcedf5; border: 1px solid #7cc3e6; }
.glabel { height: 22px; margin-top: 4px; padding: 0 12px; gap: 4px; }
.glabel .caret { margin-bottom: 3px; }

.stage { position: relative; flex: 1; min-height: 500px; overflow: hidden; background: #fefefe; }
.scene { position: absolute; inset: 0; width: 100%; height: 100%; }
.shadow { fill: #cfccd0; }
.minor, .major, .edge, .axisg, .axisr { fill: none; }
.minor { stroke: #4b3c5e; stroke-opacity: .12; stroke-width: 1; }
.major { stroke: #3c3545; stroke-opacity: .19; stroke-width: 2; }
.edge { stroke: #86848a; stroke-width: 2; }
.axisg { stroke: #98f59a; stroke-width: 2; }
.axisr { stroke: #f79ea3; stroke-width: 2; }
.thru { stroke: #983c36; }
.browser { position: absolute; left: 5px; top: 5px; width: 374px; }
.panelhead { display: flex; align-items: center; gap: 16px; height: 30px; padding: 0 14px 0 7px; background: #f5f4f7; border: 1px solid #dcdbde; }
.panelhead h2 { flex: 1; }
.tree { list-style: none; margin: 4px 0 0; padding: 0; }
.tree li { display: flex; align-items: center; height: 30px; padding-left: 46px; gap: 14px; }
.tree li.root { padding-left: 22px; gap: 11px; }
.node { display: flex; align-items: center; gap: 12px; height: 26px; padding: 0 16px 0 7px; margin-left: -4px; background: #f6f5f7e6; white-space: nowrap; }
.node > span { padding-left: 5px; }
.node .sel { display: flex; align-items: center; gap: 16px; height: 24px; margin-left: -5px; padding: 0 13px 0 5px; background: #d7d6d9; }
.root .node { padding: 0 9px 0 4px; margin-left: 0; }
.tree input { appearance: none; width: 17px; height: 17px; margin: 0 0 0 -6px; border: 1px solid #66666a; border-radius: 50%; background: radial-gradient(circle, #333 0 3px, #dfe1ea 4px); }
.notice { position: absolute; top: 5px; left: 50%; margin-left: -230px; display: flex; align-items: center; height: 30px; padding: 0 0 0 3px; background: #f5f4f7; white-space: nowrap; }
.notice b { padding: 0 26px 0 8px; font-size: 14px; }
.notice span { padding-right: 19px; border-right: 1px solid #e2e1e4; line-height: 28px; }
.notice a { padding: 0 16px 0 15px; color: #1c76a8; }
.comments { position: absolute; left: 5px; bottom: 0; width: 374px; height: 28px; padding-left: 34px; border-bottom: 0; }
.navbar { position: absolute; left: 50%; bottom: 0; margin-left: -150px; display: flex; align-items: center; justify-content: space-between; width: 300px; height: 30px; padding: 0 4px 0 5px; background: #f5f4f7; }
.navbar button { gap: 3px; }
.navbar .far { gap: 7px; }

.taskbar { display: flex; align-items: center; height: 50px; background: linear-gradient(90deg, #d3dbd9, #d8dad9 16%, #d5d9d9 24%, #dadadb 38%, #d9dada 45%, #d3dcd9 53%, #d9dadb 64%, #d4dcdb 76%, #d8dadc 86%, #d4d7df 92%, #d9dadc); color: #111; }
.apps { display: flex; flex: 1; }
.apps button { width: 62px; height: 50px; border-bottom: 3px solid transparent; border-top: 3px solid transparent; }
.apps button:first-child { width: 60px; }
.apps .open { border-bottom-color: #0a76d2; margin: 0 6px; width: 51px; }
.apps .active { background: #f0f0f2; border-top-color: #f0f0f2; margin: 0; width: 61px; }
.tasklogo b { color: #fff; font-size: 17px; line-height: 23px; padding-right: 3px; }
.tasklogo small { color: #fff; font-size: 8px; font-weight: bold; line-height: 8px; align-self: end; padding-right: 4px; }
.lang { width: 104px; color: #eef2f1; }
.tray { display: flex; align-items: center; margin-right: 4px; border-right: 1px solid #a8aaac; }
.tray button { width: 31px; height: 50px; }
.tray .weather { width: auto; gap: 10px; padding-right: 22px; font-size: 17px; }
.wind { display: grid; }
.wind > * { grid-area: 1 / 1; }
em { font-style: normal; }
.wind em { justify-self: end; align-self: start; width: 15px; height: 18px; border-radius: 9px; background: #d5261f; color: #fff; font-size: 12px; line-height: 18px; text-align: center; }
.tray .kb { width: 36px; }
.tray .clock { flex-direction: column; width: 92px; font-size: 14px; line-height: 23px; }
.tray .notes { display: grid; width: 62px; padding-left: 16px; align-content: center; justify-content: start; }
.notes > * { grid-area: 1 / 1; }
.notes em { width: 20px; height: 20px; margin: 10px 0 0 10px; border: 1px solid #77777a; border-radius: 50%; background: #d8dade; font-size: 14px; line-height: 18px; }
```

FILE: grid.js
```js
// Ground plane: j runs along the red axis, k along the green one.
function project(j, k) {
  const row = 3 + j - k;
  const col = j + k;
  const depth = 1 / (8.816e-4 - 0.3187e-4 * row);
  return [960 + (0.082 * col - 0.13) * depth, depth - 876];
}

function segment(a, b) {
  return 'M' + project(...a).map(n => n.toFixed(1)) + 'L' + project(...b).map(n => n.toFixed(1));
}

const J_MIN = -5.8, K_MAX = 7.6, REACH = 10;
let minor = '', major = '';

for (let n = -29; n <= 88; n++) {
  const j = n / 5;
  const s = segment([j, Math.max(-14, j - REACH)], [j, K_MAX]);
  if (n % 5) minor += s; else if (n) major += s;
}
for (let n = -75; n <= 38; n++) {
  const k = n / 5;
  if (k + REACH <= J_MIN) continue;
  const s = segment([J_MIN, k], [k + REACH, k]);
  if (n % 5) minor += s; else if (n) major += s;
}

const draw = (id, d) => document.getElementById(id).setAttribute('d', d);
draw('minor', minor);
draw('major', major);
draw('edge', segment([J_MIN, -4], [J_MIN, K_MAX]) + segment([J_MIN, K_MAX], [17, K_MAX]));
draw('axisg', segment([0, -10], [0, K_MAX]));
draw('axisr', segment([J_MIN, 0], [10, 0]));
```
